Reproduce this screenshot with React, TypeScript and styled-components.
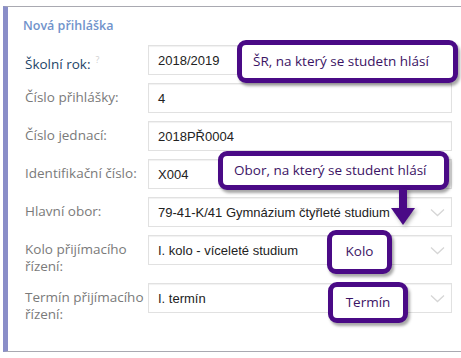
import React from "react";
import styled, { createGlobalStyle } from "styled-components";

const GlobalStyle = createGlobalStyle`
  body {
    margin: 0;
    background: #ffffff;
    font-family: "Open Sans", "Liberation Sans", sans-serif;
  }
`;

type Field = {
  label: string;
  value: string;
  select?: boolean;
  strong?: boolean;
  help?: boolean;
};

const fields: Field[] = [
  { label: "Školní rok:", value: "2018/2019", strong: true, help: true },
  { label: "Číslo přihlášky:", value: "4" },
  { label: "Číslo jednací:", value: "2018PŘ0004" },
  { label: "Identifikační číslo:", value: "X004" },
  { label: "Hlavní obor:", value: "79-41-K/41 Gymnázium čtyřleté studium", select: true },
  { label: "Kolo přijímacího řízení:", value: "I. kolo - víceleté studium", select: true },
  { label: "Termín přijímacího řízení:", value: "I. termín", select: true },
];

const Chevron = () => (
  <svg width="15" height="9" viewBox="0 0 15 9">
    <polyline points="1,1.5 7.5,7.5 14,1.5" fill="none" stroke="#d6d6d6" strokeWidth="1.3" />
  </svg>
);

const App = () => {
  return (
    <Page>
      <GlobalStyle />
      <Card>
        <Title>Nová přihláška</Title>
        <Form>
          {fields.map((f) => (
            <Row key={f.label}>
              <Label $strong={f.strong}>
                {f.label}
                {f.help && <Help>?</Help>}
              </Label>
              <Input>
                <span>{f.value}</span>
                {f.select && <Chevron />}
              </Input>
            </Row>
          ))}
        </Form>

        <Callout $left={229} $top={33} $width={221} $height={43}>
          ŠR, na který se studetn hlásí
        </Callout>
        <Callout $left={210} $top={144} $width={231} $height={39}>
          Obor, na který se student hlásí
        </Callout>
        <Arrow width="30" height="42" viewBox="0 0 30 42">
          <rect x="11" y="0" width="8" height="22" fill="#4a0a86" />
          <polygon points="3,19 27,19 15,36" fill="#4a0a86" />
        </Arrow>
        <Callout $left={319} $top={223} $width={65} $height={44} $center>
          Kolo
        </Callout>
        <Callout $left={320} $top={275} $width={80} $height={41} $center>
          Termín
        </Callout>
      </Card>
      <Marker />
    </Page>
  );
};

const Page = styled.div`
  padding: 6px 0 0 3px;
  width: 458px;
`;

const Card = styled.div`
  position: relative;
  background: #ffffff;
  border-top: 1px solid #a9a9b1;
  border-bottom: 1px solid #a9a9b1;
  border-left: 5px solid #8a8ec8;
  padding: 11px 9px 28px 15px;
`;

const Title = styled.div`
  font-size: 12.5px;
  font-weight: 600;
  line-height: 16px;
  color: #7193cb;
`;

const Form = styled.div`
  margin-top: 11px;
  display: flex;
  flex-direction: column;
  gap: 8px;
`;

const Row = styled.div`
  display: grid;
  grid-template-columns: 125px 1fr;
  align-items: start;
`;

const Label = styled.div<{ $strong?: boolean }>`
  padding: 6px 0 0 2px;
  font-size: 13.5px;
  line-height: 17px;
  color: ${(p) => (p.$strong ? "#1d4468" : "#7a7a7a")};
`;

const Help = styled.sup`
  margin-left: 5px;
  font-size: 9px;
  color: #cfcfcf;
`;

const Input = styled.div`
  height: 30px;
  box-sizing: border-box;
  border: 1px solid #e1e1e1;
  box-shadow: inset 0 1px 1px rgba(0, 0, 0, 0.06);
  display: flex;
  align-items: center;
  justify-content: space-between;
  padding: 0 6px 0 9px;
  font-family: "Liberation Sans", Arial, sans-serif;
  font-size: 13px;
  color: #222;
  span {
    white-space: nowrap;
  }
`;

const Callout = styled.div<{
  $left: number;
  $top: number;
  $width: number;
  $height: number;
  $center?: boolean;
}>`
  position: absolute;
  left: ${(p) => p.$left}px;
  top: ${(p) => p.$top}px;
  width: ${(p) => p.$width}px;
  height: ${(p) => p.$height}px;
  box-sizing: border-box;
  border: 5px solid #4a0a86;
  border-radius: 9px;
  background: #ffffff;
  box-shadow: 2px 3px 3px rgba(0, 0, 0, 0.35);
  display: flex;
  align-items: center;
  justify-content: ${(p) => (p.$center ? "center" : "flex-start")};
  padding-bottom: 2px;
  padding-left: ${(p) => (p.$center ? 0 : 11)}px;
  font-family: "Open Sans", "Liberation Sans", sans-serif;
  font-size: 13.5px;
  color: #3b1364;
  white-space: nowrap;
`;

const Arrow = styled.svg`
  position: absolute;
  left: 380px;
  top: 182px;
  filter: drop-shadow(2px 2px 2px rgba(0, 0, 0, 0.35));
`;

const Marker = styled.div`
  margin-top: 8px;
  width: 5px;
  height: 6px;
  background: #efb3bd;
`;

export default App;
